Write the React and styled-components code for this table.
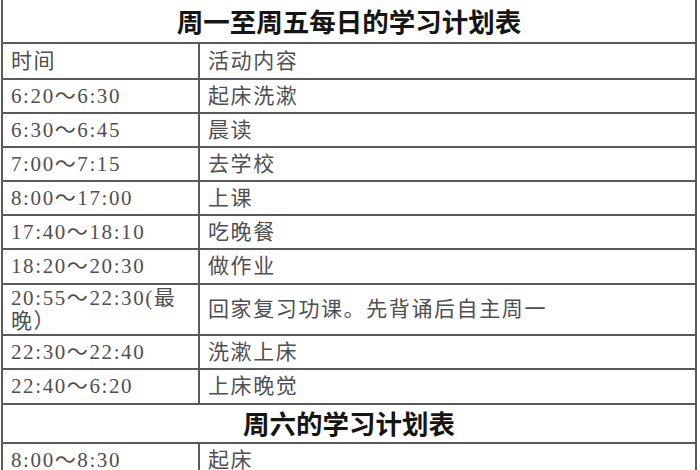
import React from 'react';
import styled, { createGlobalStyle } from 'styled-components';

const GlobalStyle = createGlobalStyle`
  html, body {
    margin: 0;
    padding: 0;
    background: #ffffff;
  }
  body {
    width: 700px;
    height: 470px;
    overflow: hidden;
  }
`;

const Page = styled.div`
  padding-left: 1px;
  width: 697px;
`;

const Table = styled.table`
  width: 696px;
  border-collapse: collapse;
  table-layout: fixed;
  font-family: "Liberation Serif", "Noto Sans CJK SC", serif;
  color: #4f4f4f;
`;

const Row = styled.tr`
  height: ${p => p.$h}px;
`;

const TitleCell = styled.td`
  border: 2px solid #5a5a5a;
  border-top: ${p => (p.$first ? 'none' : '2px solid #5a5a5a')};
  text-align: center;
  vertical-align: middle;
  font-family: "Noto Sans CJK SC", sans-serif;
  font-weight: 700;
  font-size: 26.5px;
  color: #151515;
  padding: 0;
  line-height: 1;
`;

const Cell = styled.td`
  border: 2px solid #5a5a5a;
  padding: 0 0 0 8px;
  font-size: 21px;
  line-height: 23px;
  letter-spacing: 1.6px;
  vertical-align: middle;
  white-space: pre-line;
`;

const weekday = [
  ['6:20～6:30', '起床洗漱'],
  ['6:30～6:45', '晨读'],
  ['7:00～7:15', '去学校'],
  ['8:00～17:00', '上课'],
  ['17:40～18:10', '吃晚餐'],
  ['18:20～20:30', '做作业'],
];

const weekdayTail = [
  ['22:30～22:40', '洗漱上床', 34],
  ['22:40～6:20', '上床晚觉', 35],
];

const App = () => (
  <Page>
    <GlobalStyle />
    <Table>
      <colgroup>
        <col style={{ width: 197 }} />
        <col />
      </colgroup>
      <tbody>
        <Row $h={43}>
          <TitleCell colSpan={2} $first>周一至周五每日的学习计划表</TitleCell>
        </Row>
        <Row $h={36}>
          <Cell>时间</Cell>
          <Cell>活动内容</Cell>
        </Row>
        {weekday.map(([time, task], i) => (
          <Row key={time} $h={i === 5 ? 35 : 34}>
            <Cell>{time}</Cell>
            <Cell>{task}</Cell>
          </Row>
        ))}
        <Row $h={51}>
          <Cell>{'20:55～22:30(最\n晚）'}</Cell>
          <Cell>回家复习功课。先背诵后自主周一</Cell>
        </Row>
        {weekdayTail.map(([time, task, h]) => (
          <Row key={time} $h={h}>
            <Cell>{time}</Cell>
            <Cell>{task}</Cell>
          </Row>
        ))}
        <Row $h={39}>
          <TitleCell colSpan={2}>周六的学习计划表</TitleCell>
        </Row>
        <Row $h={34}>
          <Cell>8:00～8:30</Cell>
          <Cell>起床</Cell>
        </Row>
      </tbody>
    </Table>
  </Page>
);

export default App;
